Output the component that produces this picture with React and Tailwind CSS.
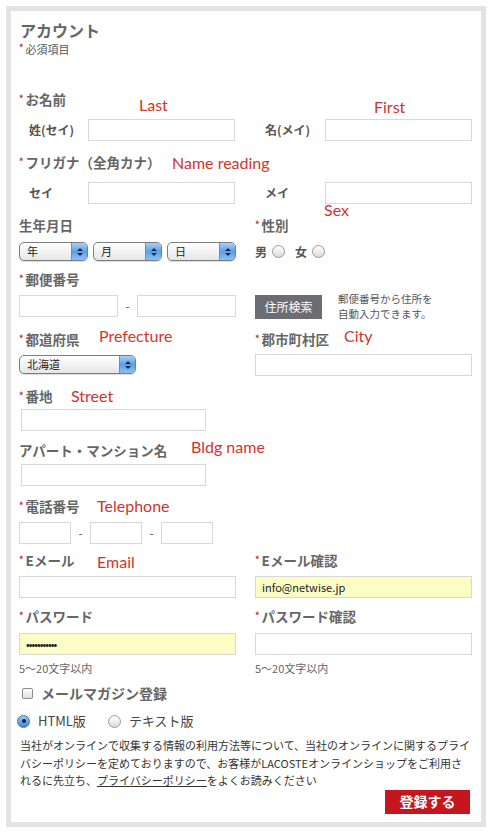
import React from "react"

const jp = { fontFamily: '"Noto Sans CJK JP", "Noto Sans", "Liberation Sans", sans-serif' }

const Req = () => (
  <span className="relative top-[-3px] mr-[2px] inline-block text-[9px] font-bold leading-none text-[#c8262b]">*</span>
)

const Label = ({ req, children }) => (
  <div className="h-[18px] leading-[18px] text-[13.5px] font-bold text-[#666] whitespace-nowrap">
    {req && <Req />}
    {children}
  </div>
)

const Input = ({ className = "", yellow, value }) => (
  <div
    className={`h-[22px] border border-[#d8d8d8] px-[6px] text-[11px] leading-[20px] text-[#222] ${
      yellow ? "bg-[#fbfdc4]" : "bg-white"
    } ${className}`}
  >
    {value}
  </div>
)

const Select = ({ label, className = "" }) => (
  <div
    className={`flex h-[19px] overflow-hidden rounded-[5px] border border-[#7d7d7d] bg-gradient-to-b from-white to-[#e6e6e6] shadow-[0_1px_1px_rgba(0,0,0,0.15)] ${className}`}
  >
    <span className="flex-1 pl-[7px] text-[11px] leading-[17px] text-[#222]">{label}</span>
    <span className="flex w-[16px] flex-col items-center justify-center gap-[2px] border-l border-[#6a8fbf] bg-gradient-to-b from-[#a9d0f7] via-[#5d9ee8] to-[#8cc0f2]">
      <span className="h-0 w-0 border-x-[3px] border-b-[3px] border-x-transparent border-b-[#1b2a44]"></span>
      <span className="h-0 w-0 border-x-[3px] border-t-[3px] border-x-transparent border-t-[#1b2a44]"></span>
    </span>
  </div>
)

const Radio = ({ checked, className = "" }) =>
  checked ? (
    <span className={`flex h-[13px] w-[13px] shrink-0 items-center justify-center rounded-full border border-[#3f73b5] bg-gradient-to-b from-[#9cc8f5] to-[#3d86d9] ${className}`}>
      <span className="block h-[4px] w-[4px] rounded-full bg-[#14243d]"></span>
    </span>
  ) : (
    <span className={`block h-[13px] w-[13px] shrink-0 rounded-full border border-[#9a9a9a] bg-gradient-to-b from-white to-[#dcdcdc] ${className}`}></span>
  )

const Note = ({ x, y, children }) => (
  <span
    className="absolute text-[16px] leading-[20px] text-[#d0352c] whitespace-nowrap"
    style={{ left: x, top: y - 10, fontFamily: "Lato, sans-serif" }}
  >
    {children}
  </span>
)

const App = () => {
  return (
    <div className="relative min-h-[834px] bg-white p-[6px]" style={jp}>
      <div className="h-[821px] w-[480px] border-[5px] border-[#e3e3e3] bg-white pl-[8px] pr-[9px] pt-[9px]">
        {/* Header */}
        <div className="pl-[1px] text-[16px] font-bold leading-[20px] text-[#666]">アカウント</div>
        <div className="mt-[2px] text-[11px] leading-[14px] text-[#555]">
          <Req />
          必須項目
        </div>

        {/* Name */}
        <div className="mt-[34px]">
          <Label req>お名前</Label>
        </div>
        <div className="mt-[11px] grid grid-cols-2 gap-[19px]">
          <div className="flex items-center">
            <span className="w-[69px] pl-[10px] text-[12px] font-bold text-[#555]">姓(セイ)</span>
            <Input className="w-[147px]" />
          </div>
          <div className="flex items-center">
            <span className="w-[70px] pl-[10px] text-[12px] font-bold text-[#555]">名(メイ)</span>
            <Input className="w-[147px]" />
          </div>
        </div>

        <div className="mt-[12px]">
          <Label req>フリガナ（全角カナ）</Label>
        </div>
        <div className="mt-[11px] grid grid-cols-2 gap-[19px]">
          <div className="flex items-center">
            <span className="w-[69px] pl-[10px] text-[12px] font-bold text-[#555]">セイ</span>
            <Input className="w-[147px]" />
          </div>
          <div className="flex items-center">
            <span className="w-[70px] pl-[10px] text-[12px] font-bold text-[#555]">メイ</span>
            <Input className="w-[147px]" />
          </div>
        </div>

        {/* Birthday / Sex */}
        <div className="mt-[12px] grid grid-cols-2 gap-[19px]">
          <div>
            <Label>生年月日</Label>
            <div className="mt-[8px] flex gap-[5px]">
              <Select label="年" className="w-[69px]" />
              <Select label="月" className="w-[69px]" />
              <Select label="日" className="w-[69px]" />
            </div>
          </div>
          <div>
            <Label req>性別</Label>
            <div className="mt-[8px] flex h-[19px] items-center text-[12px] font-bold text-[#555]">
              <span>男</span>
              <Radio className="ml-[5px]" />
              <span className="ml-[10px]">女</span>
              <Radio className="ml-[5px]" />
            </div>
          </div>
        </div>

        {/* Postal */}
        <div className="mt-[9px]">
          <Label req>郵便番号</Label>
        </div>
        <div className="mt-[7px] grid h-[24px] grid-cols-2 gap-[19px]">
          <div className="flex items-start">
            <Input className="w-[99px]" />
            <span className="w-[19px] text-center text-[12px] leading-[22px] text-[#555]">-</span>
            <Input className="w-[99px]" />
          </div>
          <div className="flex items-start">
            <button className="h-[24px] w-[67px] bg-[#6b6d72] text-[12px] text-white">住所検索</button>
            <div className="ml-[16px] mt-[-4px] text-[10.5px] leading-[15px] text-[#555]">
              郵便番号から住所を
              <br />
              自動入力できます。
            </div>
          </div>
        </div>

        {/* Prefecture / City */}
        <div className="mt-[11px] grid grid-cols-2 gap-[19px]">
          <div>
            <Label req>都道府県</Label>
            <div className="mt-[7px]">
              <Select label="北海道" className="w-[117px]" />
            </div>
          </div>
          <div>
            <Label req>郡市町村区</Label>
            <Input className="mt-[6px] w-[217px]" />
          </div>
        </div>

        {/* Street */}
        <div className="mt-[11px]">
          <Label req>番地</Label>
        </div>
        <Input className="ml-[2px] mt-[4px] w-[185px]" />

        <div className="mt-[10px]">
          <Label>アパート・マンション名</Label>
        </div>
        <Input className="ml-[2px] mt-[5px] w-[185px]" />

        {/* Telephone */}
        <div className="mt-[11px]">
          <Label req>電話番号</Label>
        </div>
        <div className="mt-[7px] flex items-center">
          <Input className="w-[52px]" />
          <span className="w-[19px] text-center text-[12px] text-[#555]">-</span>
          <Input className="w-[52px]" />
          <span className="w-[19px] text-center text-[12px] text-[#555]">-</span>
          <Input className="w-[52px]" />
        </div>

        {/* Email */}
        <div className="mt-[7px] grid grid-cols-2 gap-[19px]">
          <div>
            <Label req>Eメール</Label>
            <Input className="mt-[7px]" />
          </div>
          <div>
            <Label req>Eメール確認</Label>
            <Input className="mt-[7px]" yellow value="info@netwise.jp" />
          </div>
        </div>

        {/* Password */}
        <div className="mt-[9px] grid grid-cols-2 gap-[19px]">
          <div>
            <Label req>パスワード</Label>
            <Input className="mt-[8px] tracking-[-1px]" yellow value="•••••••••••" />
            <div className="mt-[5px] text-[11px] leading-[16px] text-[#666]">5〜20文字以内</div>
          </div>
          <div>
            <Label req>パスワード確認</Label>
            <Input className="mt-[8px]" />
            <div className="mt-[5px] text-[11px] leading-[16px] text-[#666]">5〜20文字以内</div>
          </div>
        </div>

        {/* Mail magazine */}
        <div className="mt-[7px] flex h-[20px] items-center">
          <span className="ml-[3px] block h-[11px] w-[11px] rounded-[2px] border border-[#8a8a8a] bg-gradient-to-b from-white to-[#e0e0e0]"></span>
          <span className="ml-[8px] text-[14px] font-bold text-[#666]">メールマガジン登録</span>
        </div>
        <div className="mt-[8px] flex h-[20px] items-center text-[13px] text-[#444]">
          <Radio checked className="ml-[-2px]" />
          <span className="ml-[8px]">HTML版</span>
          <Radio className="ml-[22px]" />
          <span className="ml-[8px]">テキスト版</span>
        </div>

        {/* Privacy */}
        <p className="mt-[6px] whitespace-nowrap pl-[1px] text-[11px] leading-[17.5px] text-[#333]">
          当社がオンラインで収集する情報の利用方法等について、当社のオンラインに関するプライ
          <br />
          バシーポリシーを定めておりますので、お客様がLACOSTEオンラインショップをご利用さ
          <br />
          れるに先立ち、<span className="underline">プライバシーポリシー</span>をよくお読みください
        </p>

        <div className="flex justify-end pr-[2px]">
          <button className="h-[24px] w-[85px] bg-[#c4161c] text-[14px] font-bold text-white">登録する</button>
        </div>
      </div>

      {/* annotations */}
      <Note x={139} y={105}>Last</Note>
      <Note x={374} y={107}>First</Note>
      <Note x={172} y={163}>Name reading</Note>
      <Note x={324} y={210}>Sex</Note>
      <Note x={99} y={336}>Prefecture</Note>
      <Note x={344} y={336}>City</Note>
      <Note x={71} y={396}>Street</Note>
      <Note x={191} y={447}>Bldg name</Note>
      <Note x={97} y={506}>Telephone</Note>
      <Note x={97} y={562}>Email</Note>
    </div>
  )
}

export default App
